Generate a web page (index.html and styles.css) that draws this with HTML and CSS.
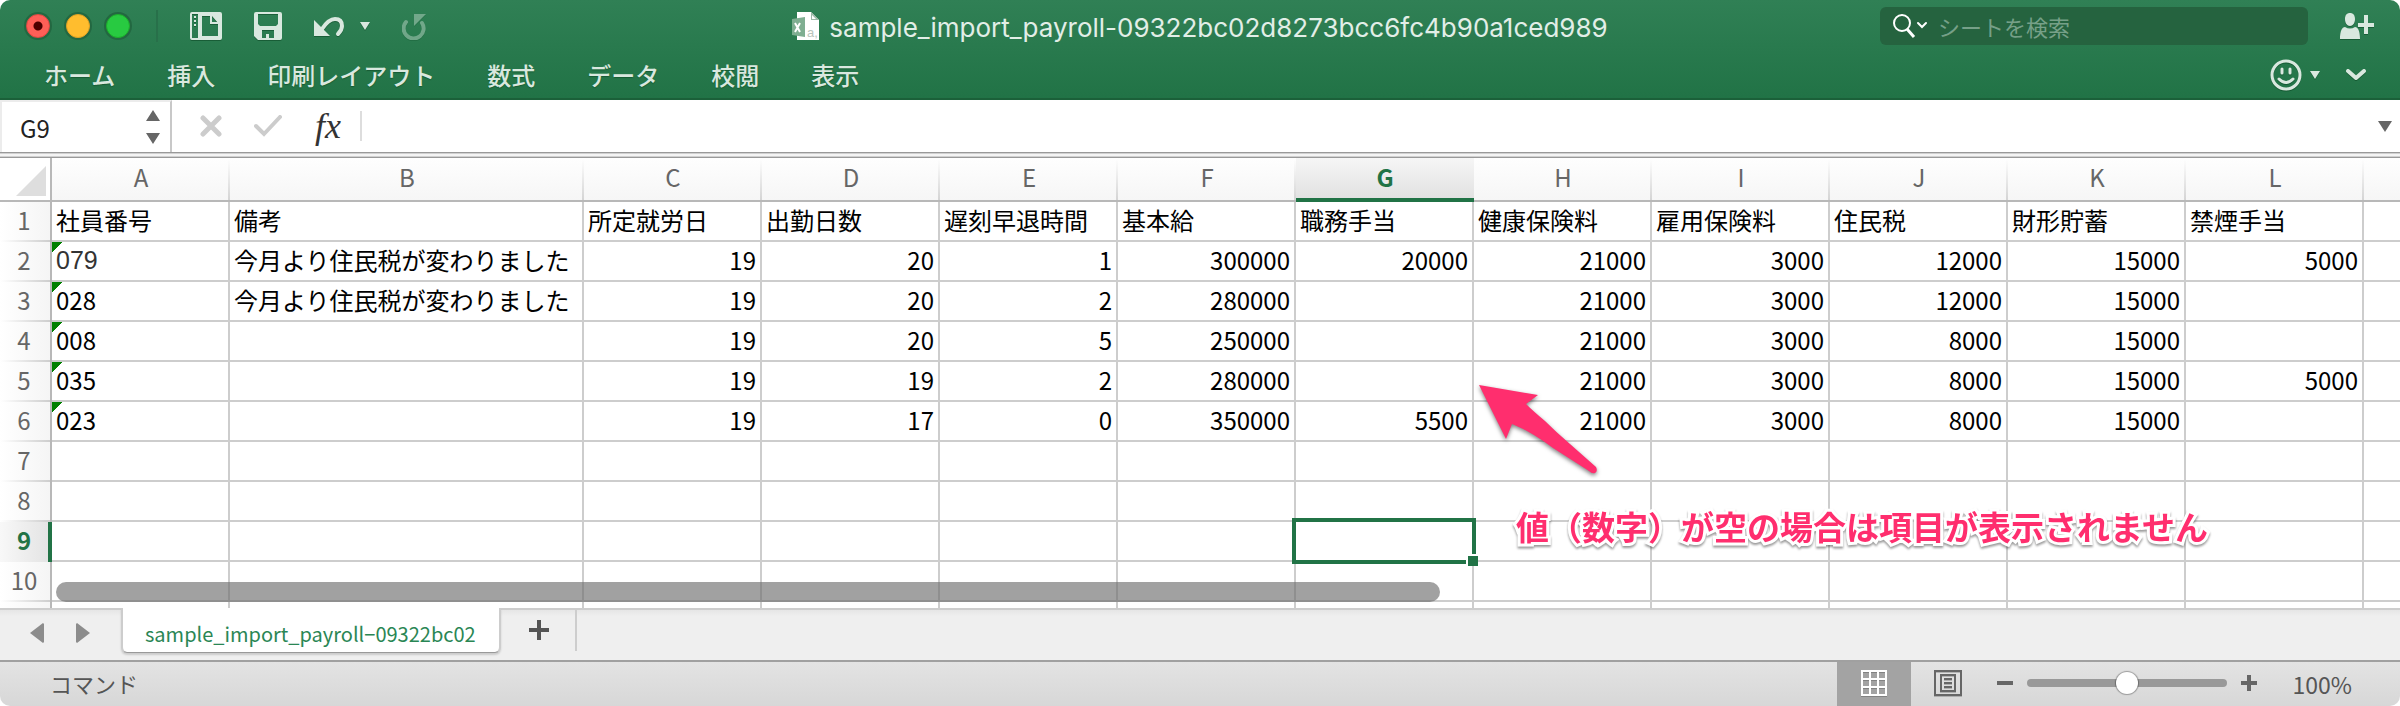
FILE: index.html
```html
<!DOCTYPE html>
<html lang="ja">
<head>
<meta charset="utf-8">
<title>sample_import_payroll</title>
<link rel="stylesheet" href="styles.css">
</head>
<body>
<div class="window">
  <header class="titlebar">
    <div class="titlebar-row">
      <div class="tools">
        <div class="lights">
          <button class="light light-close" aria-label="閉じる"></button>
          <button class="light light-min" aria-label="しまう"></button>
          <button class="light light-max" aria-label="拡大"></button>
        </div>
        <span class="tool-divider"></span>
        <div class="quick">
          <button class="icon-btn" aria-label="テンプレート">
            <svg width="32" height="28" viewBox="0 0 32 28"><path fill="currentColor" fill-rule="evenodd" d="M2 0H30a2 2 0 0 1 2 2V26a2 2 0 0 1-2 2H2a2 2 0 0 1-2-2V2a2 2 0 0 1 2-2zM2 2V26H8V2zM12 4V24H28V11L22 4z"/><path fill="currentColor" d="M4 4h2v2H4zM4 8h2v2H4zM4 12h2v2H4zM20 4h2v6h6v2H20z"/></svg>
          </button>
          <button class="icon-btn" aria-label="保存">
            <svg width="28" height="28" viewBox="0 0 28 28"><path fill="currentColor" fill-rule="evenodd" d="M2 0H26a2 2 0 0 1 2 2V26a2 2 0 0 1-2 2H4L0 24V2a2 2 0 0 1 2-2zM4 2V12l2 2H22l2-2V2zM8 18V26H12V22H15V26H20V18z"/></svg>
          </button>
          <button class="icon-btn undo" aria-label="元に戻す">
            <svg width="30" height="22" viewBox="0 0 30 22"><path fill="currentColor" d="M0 5V21H16z"/><path fill="none" stroke="currentColor" stroke-width="4" stroke-linecap="round" d="M8 14C12 8 16 4 21 4c5 0 7 3 7 7 0 4-2 6-4 8"/></svg>
            <svg class="caret" width="10" height="8" viewBox="0 0 10 8"><path fill="currentColor" d="M0 0H10L5 8z"/></svg>
          </button>
          <button class="icon-btn" aria-label="やり直し" disabled>
            <svg width="24" height="28" viewBox="0 0 24 28"><path fill="none" stroke="currentColor" stroke-width="4" stroke-linecap="round" d="M4 10A10 10 0 1 0 20 11"/><path fill="currentColor" d="M12 2H24L12 14z"/></svg>
          </button>
        </div>
      </div>
      <h1 class="doc-title">
        <svg width="28" height="28" viewBox="0 0 28 28"><path fill="#fff" d="M5 0H19L27 8V28H5z"/><path fill="#9cb8a6" d="M19 0V8H27L19 0z"/><path fill="#fff" d="M20 3V7H24z"/><path fill="#7fae91" d="M0 7L13 5V25L0 23z"/><path stroke="#fff" stroke-width="2" d="M3 11L8 20M8 11L3 20"/><text x="15" y="25" font-family="Liberation Sans" font-size="13" fill="#b9c4bd">a,</text></svg>
        <span>sample_import_payroll-09322bc02d8273bcc6fc4b90a1ced989</span>
      </h1>
      <div class="title-end">
        <label class="search">
          <svg width="36" height="26" viewBox="0 0 36 26"><g fill="none" stroke="#fff"><circle cx="10" cy="10" r="8" stroke-width="2"/><path stroke-width="3" d="M15 16L22 24"/><path stroke-width="2" d="M26 10L30 14L34 10" stroke-linecap="round"/></g></svg>
          <input type="text" placeholder="シートを検索" aria-label="シートを検索">
        </label>
        <button class="icon-btn" aria-label="共有">
          <svg width="34" height="26" viewBox="0 0 34 26"><path fill="currentColor" d="M10 0c3 0 5 2 5 6s-2 7-5 7-5-3-5-7 2-6 5-6zM0 26c0-8 2-12 5-12q5 3 10 0c3 0 5 4 5 12zM24 2h4v8h6v4h-6v7h-4v-7h-6v-4h6z"/></svg>
        </button>
      </div>
    </div>
    <div class="ribbon">
      <nav class="ribbon-tabs">
        <a href="#">ホーム</a><a href="#">挿入</a><a href="#">印刷レイアウト</a><a href="#">数式</a><a href="#">データ</a><a href="#">校閲</a><a href="#">表示</a>
      </nav>
      <div class="ribbon-end">
        <button class="icon-btn smile" aria-label="フィードバック">
          <svg width="32" height="32" viewBox="0 0 32 32"><g fill="none" stroke="currentColor" stroke-linecap="round"><circle cx="16" cy="16" r="14" stroke-width="3"/><path stroke-width="3" d="M12 10V14M20 10V14"/><path stroke-width="3" d="M9 20Q16 27 23 20"/></g></svg>
          <svg width="10" height="8" viewBox="0 0 10 8"><path fill="currentColor" d="M0 0H10L5 8z"/></svg>
        </button>
        <button class="icon-btn" aria-label="リボンを表示">
          <svg width="20" height="12" viewBox="0 0 20 12"><path fill="none" stroke="currentColor" stroke-width="4" stroke-linecap="round" stroke-linejoin="round" d="M2 2L10 9L18 2"/></svg>
        </button>
      </div>
    </div>
  </header>

  <div class="formula-bar">
    <div class="name-box">
      <input type="text" value="G9" aria-label="名前ボックス">
      <button class="spinner" aria-label="名前の一覧">
        <svg width="14" height="34" viewBox="0 0 14 34"><path fill="#666" d="M0 11L7 0L14 11zM0 23H14L7 34z"/></svg>
      </button>
    </div>
    <div class="formula-tools">
      <button aria-label="キャンセル"><svg width="22" height="22" viewBox="0 0 22 22"><path stroke="#ccc" stroke-width="5" stroke-linecap="round" d="M3 3L19 19M19 3L3 19"/></svg></button>
      <button aria-label="入力"><svg width="28" height="22" viewBox="0 0 28 22"><path fill="none" stroke="#ccc" stroke-width="4" stroke-linecap="round" d="M2 11L10 19L26 2"/></svg></button>
      <button class="fx" aria-label="関数の挿入">fx</button>
    </div>
    <input class="formula" type="text" aria-label="数式バー">
    <button class="expand" aria-label="数式バーを展開"><svg width="14" height="11" viewBox="0 0 14 11"><path fill="#666" d="M0 0H14L7 11z"/></svg></button>
  </div>

  <main class="sheet">
    <table class="grid">
      <colgroup><col class="c-row"><col class="c-std"><col class="c-wide"><col class="c-std"><col class="c-std"><col class="c-std"><col class="c-std"><col class="c-std"><col class="c-std"><col class="c-std"><col class="c-std"><col class="c-std"><col class="c-std"><col></colgroup>
      <thead>
        <tr><td class="corner"><svg width="30" height="30" viewBox="0 0 30 30"><path fill="#dedede" d="M30 0V30H0z"/></svg></td><th>A</th><th>B</th><th>C</th><th>D</th><th>E</th><th>F</th><th class="active">G</th><th>H</th><th>I</th><th>J</th><th>K</th><th>L</th><th></th></tr>
      </thead>
      <tbody>
        <tr class="labels"><th>1</th><td>社員番号</td><td>備考</td><td>所定就労日</td><td>出勤日数</td><td>遅刻早退時間</td><td>基本給</td><td>職務手当</td><td>健康保険料</td><td>雇用保険料</td><td>住民税</td><td>財形貯蓄</td><td>禁煙手当</td><td></td></tr>
        <tr><th>2</th><td class="text flag strong">079</td><td class="text">今月より住民税が変わりました</td><td>19</td><td>20</td><td>1</td><td>300000</td><td>20000</td><td>21000</td><td>3000</td><td>12000</td><td>15000</td><td>5000</td><td></td></tr>
        <tr><th>3</th><td class="text flag">028</td><td class="text">今月より住民税が変わりました</td><td>19</td><td>20</td><td>2</td><td>280000</td><td></td><td>21000</td><td>3000</td><td>12000</td><td>15000</td><td></td><td></td></tr>
        <tr><th>4</th><td class="text flag">008</td><td></td><td>19</td><td>20</td><td>5</td><td>250000</td><td></td><td>21000</td><td>3000</td><td>8000</td><td>15000</td><td></td><td></td></tr>
        <tr><th>5</th><td class="text flag">035</td><td></td><td>19</td><td>19</td><td>2</td><td>280000</td><td></td><td>21000</td><td>3000</td><td>8000</td><td>15000</td><td>5000</td><td></td></tr>
        <tr><th>6</th><td class="text flag">023</td><td></td><td>19</td><td>17</td><td>0</td><td>350000</td><td>5500</td><td>21000</td><td>3000</td><td>8000</td><td>15000</td><td></td><td></td></tr>
        <tr><th>7</th><td></td><td></td><td></td><td></td><td></td><td></td><td></td><td></td><td></td><td></td><td></td><td></td><td></td></tr>
        <tr><th>8</th><td></td><td></td><td></td><td></td><td></td><td></td><td></td><td></td><td></td><td></td><td></td><td></td><td></td></tr>
        <tr><th class="active">9</th><td></td><td></td><td></td><td></td><td></td><td></td><td class="selected"><span class="cursor"></span></td><td></td><td></td><td></td><td></td><td></td><td></td></tr>
        <tr><th>10</th><td></td><td></td><td></td><td></td><td></td><td></td><td></td><td></td><td></td><td></td><td></td><td></td><td></td></tr>
        <tr><th></th><td></td><td></td><td></td><td></td><td></td><td></td><td></td><td></td><td></td><td></td><td></td><td></td><td></td></tr>
      </tbody>
    </table>
    <div class="scrollbar"></div>
    <svg class="arrow" width="126" height="96" viewBox="0 0 126 96"><path fill="#ff2e6e" d="M3 2L62 12L50 21Q57 28 69 38Q80 49 94 61L120 84Q122 88 119 90Q116 91 113 88L77 65Q54 48 36 41L30 56z"/></svg>
    <p class="note">値（数字）が空の場合は項目が表示されません</p>
  </main>

  <div class="tabbar">
    <div class="tab-nav">
      <button aria-label="前のシート"><svg width="14" height="20" viewBox="0 0 14 20"><path fill="#8c8c8c" d="M13 0L14 1V19L13 20L0 10z"/></svg></button>
      <button aria-label="次のシート"><svg width="14" height="20" viewBox="0 0 14 20"><path fill="#8c8c8c" d="M1 0L0 1V19L1 20L14 10z"/></svg></button>
    </div>
    <button class="sheet-tab">sample_import_payroll−09322bc02</button>
    <button class="add" aria-label="シートの追加"><svg width="20" height="20" viewBox="0 0 20 20"><path stroke="#555" stroke-width="4" d="M10 0V20M0 10H20"/></svg></button>
  </div>

  <footer class="status">
    <span class="mode">コマンド</span>
    <button class="view view-on" aria-label="標準"><svg width="26" height="26" viewBox="0 0 26 26"><path fill="none" stroke="#fff" stroke-width="2" d="M1 1H25V25H1zM9 1V25M17 1V25M1 9H25M1 17H25"/></svg></button>
    <button class="view" aria-label="ページレイアウト"><svg width="28" height="26" viewBox="0 0 28 26"><path fill="none" stroke="#666" stroke-width="2" d="M1 1H27V25H1zM7 5H21V21H7zM10 9H18M10 13H18M10 17H18"/></svg></button>
    <div class="zoom">
      <button aria-label="縮小"><svg width="16" height="16" viewBox="0 0 16 16"><path stroke="#666" stroke-width="4" d="M0 8H16"/></svg></button>
      <input type="range" min="0" max="200" value="100" aria-label="ズーム">
      <button aria-label="拡大"><svg width="16" height="16" viewBox="0 0 16 16"><path stroke="#666" stroke-width="4" d="M0 8H16M8 0V16"/></svg></button>
      <span class="percent">100%</span>
    </div>
  </footer>
</div>
</body>
</html>
```
FILE: styles.css
```css
* { box-sizing: border-box; }

body {
  margin: 0;
  background: #fff;
  font-family: "Noto Sans CJK JP", sans-serif;
  font-size: 24px;
}

button {
  display: flex;
  align-items: center;
  padding: 0;
  border: 0;
  background: none;
  font: inherit;
  color: inherit;
}

input { border: 0; outline: 0; background: none; font: inherit; min-width: 0; }

.window {
  display: flex;
  flex-direction: column;
  height: 100vh;
  overflow: hidden;
  border-radius: 10px;
  background: #fff;
}

/* title bar and ribbon */
.titlebar {
  flex: none;
  color: #d9e8df;
  background: linear-gradient(#308055, #217346);
  border-bottom: 2px solid #1b6039;
}

.titlebar-row {
  display: grid;
  grid-template-columns: 1fr auto 1fr;
  align-items: center;
  height: 52px;
}

.tools { display: flex; align-items: center; padding-left: 26px; }
.lights { display: flex; gap: 16px; }
.light { width: 24px; height: 24px; border-radius: 50%; box-shadow: 0 0 0 2px #236841; }
.light-close { background: radial-gradient(circle, #4d0000 4px, #ff5f57 5px); border: 1px solid #e2443f; }
.light-min { background: #ffbd2e; border: 1px solid #dfa023; }
.light-max { background: #28ca41; border: 1px solid #1dad2b; }
.tool-divider { width: 2px; height: 32px; margin: 0 32px 0 26px; background: #28704a; }
.quick { display: flex; align-items: center; gap: 32px; }
.undo { gap: 16px; }
.icon-btn svg { filter: drop-shadow(0 1px 0 rgba(0, 50, 20, .4)); }
.icon-btn:disabled { color: #d9e8df; opacity: .4; }

.doc-title {
  display: flex;
  align-items: center;
  gap: 9px;
  margin: 0;
  font: 400 26px/36px Inter, sans-serif;
  color: #e2eee7;
}
.doc-title span { padding-top: 4px; }

.title-end { display: flex; justify-content: flex-end; align-items: center; gap: 32px; padding-right: 26px; }

.search {
  display: flex;
  align-items: center;
  gap: 10px;
  width: 428px;
  height: 38px;
  padding: 0 12px;
  border-radius: 6px;
  background: #25633f;
}
.search input { flex: 1; padding: 0; font-size: 22px; color: #fff; }
.search input::placeholder { color: #76a088; opacity: 1; }

.ribbon { display: flex; justify-content: space-between; align-items: center; height: 46px; padding: 0 34px 0 44px; }
.ribbon-tabs { display: flex; gap: 52px; }
.ribbon-tabs a { color: inherit; text-decoration: none; font-weight: 500; line-height: 46px; text-shadow: 0 1px 1px rgba(0, 50, 20, .4); }
.ribbon-end { display: flex; align-items: center; gap: 26px; }
.smile { gap: 8px; }

/* formula bar */
.formula-bar {
  flex: none;
  display: flex;
  align-items: center;
  height: 58px;
  padding-bottom: 6px;
  background: linear-gradient(#999 1px, #d0d0d0 1px 2px, #f4f4f4 2px 4px, #d0d0d0 4px 5px, #999 5px) bottom / 100% 6px no-repeat;
}
.name-box {
  display: flex;
  align-items: center;
  align-self: stretch;
  width: 172px;
  padding: 0 10px 0 18px;
  border: 2px solid #ececec;
  border-right-color: #c8c8c8;
  border-bottom: 0;
}
.name-box input { flex: 1; padding: 0; color: #222; }
.formula-tools { display: flex; align-items: center; gap: 32px; padding: 0 18px 0 28px; }
.fx { width: 28px; justify-content: center; font: italic 36px/36px "Liberation Serif", serif; color: #333; }
.formula { flex: 1; height: 30px; border-left: 2px solid #ddd; }
.expand { padding-right: 8px; }

/* worksheet */
.sheet { position: relative; flex: 1; min-height: 0; overflow: hidden; }
.grid { width: 100%; table-layout: fixed; border-collapse: separate; border-spacing: 0; }
.c-row { width: 52px; }
.c-std { width: 178px; }
.c-wide { width: 354px; }

.grid th, .grid td { height: 40px; padding: 0 4px; line-height: 36px; vertical-align: top; white-space: nowrap; }
.grid th { font-weight: 400; color: #666; text-align: center; }
.grid td { border-right: 2px solid #cdcdcd; border-bottom: 2px solid #cdcdcd; text-align: right; color: #000; }

.grid thead th {
  height: 44px;
  line-height: 38px;
  border-bottom: 2px solid #b8b8b8;
  background: linear-gradient(#fff, #d4d4d4) right / 2px 100% no-repeat, linear-gradient(#fefefe, #f6f6f6);
}
.grid thead .active { color: #217346; font-weight: 700; border-bottom: 4px solid #217346; background: linear-gradient(#f6f6f6, #e2e2e2); }
.grid .corner { height: 44px; padding: 8px 4px 0; border-color: #b8b8b8; line-height: 0; }

.grid tbody th {
  border-right: 2px solid #b8b8b8;
  padding: 0 2px 0 0;
  background: linear-gradient(90deg, #fff, #cdcdcd) bottom / 100% 2px no-repeat, linear-gradient(90deg, #fff, #f5f5f5);
}
.grid tbody .active { color: #217346; font-weight: 700; padding: 0; border-right: 4px solid #217346; background: linear-gradient(90deg, #f8f8f8, #e4e4e4); }
.grid tr td:last-child { border-right: 0; }
.grid thead th:last-child { background: linear-gradient(#fefefe, #f6f6f6); }

.grid .labels td, .grid .text { text-align: left; }
.flag { background: linear-gradient(135deg, #008000 54%, transparent 54%) left top / 10px 10px no-repeat; }
.grid .strong { font-family: "Liberation Sans", sans-serif; font-size: 25px; color: #333; }

.selected { position: relative; }
.cursor { position: absolute; inset: -4px; z-index: 1; border: 4px solid #217346; }
.cursor::after {
  content: "";
  position: absolute;
  right: -6px;
  bottom: -6px;
  width: 10px;
  height: 10px;
  background: #217346;
  box-shadow: -2px -2px 0 #fff;
}

.scrollbar {
  position: absolute;
  left: 56px;
  right: 40%;
  bottom: 6px;
  height: 20px;
  border-radius: 10px;
  background: rgba(108, 108, 108, .64);
}

.arrow { position: absolute; left: 1476px; top: 225px; filter: drop-shadow(0 2px 2px rgba(0, 0, 0, .5)); }
.note {
  position: absolute;
  left: 1516px;
  top: 344px;
  margin: 0;
  font-size: 33px;
  font-weight: 700;
  line-height: 48px;
  white-space: nowrap;
  color: #ff2e6e;
  -webkit-text-stroke: 6px #fff;
  paint-order: stroke fill;
  filter: drop-shadow(0 2px 1px rgba(0, 0, 0, .4));
}

/* sheet tabs */
.tabbar {
  flex: none;
  display: flex;
  align-items: flex-start;
  height: 52px;
  background: linear-gradient(#cdcdcd 2px, #e6e6e6 2px, #efefef 8px);
}
.tab-nav { display: flex; gap: 32px; padding: 15px 31px 0 30px; }
.sheet-tab {
  height: 45px;
  padding: 8px 23px 0 22px;
  border: solid #cdcdcd;
  border-width: 0 2px 1px;
  border-bottom-color: #999;
  border-radius: 0 0 6px 6px;
  background: #fff;
  box-shadow: 0 2px 2px rgba(0, 0, 0, .15);
  color: #2a8654;
  font-size: 20px;
  line-height: 32px;
}
.add { height: 43px; padding: 0 26px 0 28px; border-right: 2px solid #cdcdcd; }

/* status bar */
.status {
  flex: none;
  display: flex;
  align-items: stretch;
  height: 46px;
  border-top: 2px solid #a0a0a0;
  background: linear-gradient(#e3e3e3, #d7d7d7);
  color: #555;
  font-size: 22px;
}
.mode { flex: 1; padding-left: 50px; line-height: 42px; }
.view { justify-content: center; width: 74px; padding-bottom: 2px; }
.view svg { filter: drop-shadow(0 1px 0 rgba(0, 0, 0, .2)); }
.view-on { background: #a3a3a3; }
.zoom { display: flex; align-items: center; gap: 14px; padding: 0 48px 0 12px; }
.zoom input { width: 200px; height: 22px; margin: 0; appearance: none; }
.zoom input::-webkit-slider-runnable-track { height: 8px; border-radius: 4px; background: #999; }
.zoom input::-webkit-slider-thumb {
  appearance: none;
  width: 22px;
  height: 22px;
  margin-top: -7px;
  border-radius: 50%;
  background: #fff;
  box-shadow: 0 0 1px 1px rgba(0, 0, 0, .3);
}
.zoom button, .zoom input { margin-bottom: 2px; }
.percent { padding-left: 22px; font-size: 23px; line-height: 42px; }
```
